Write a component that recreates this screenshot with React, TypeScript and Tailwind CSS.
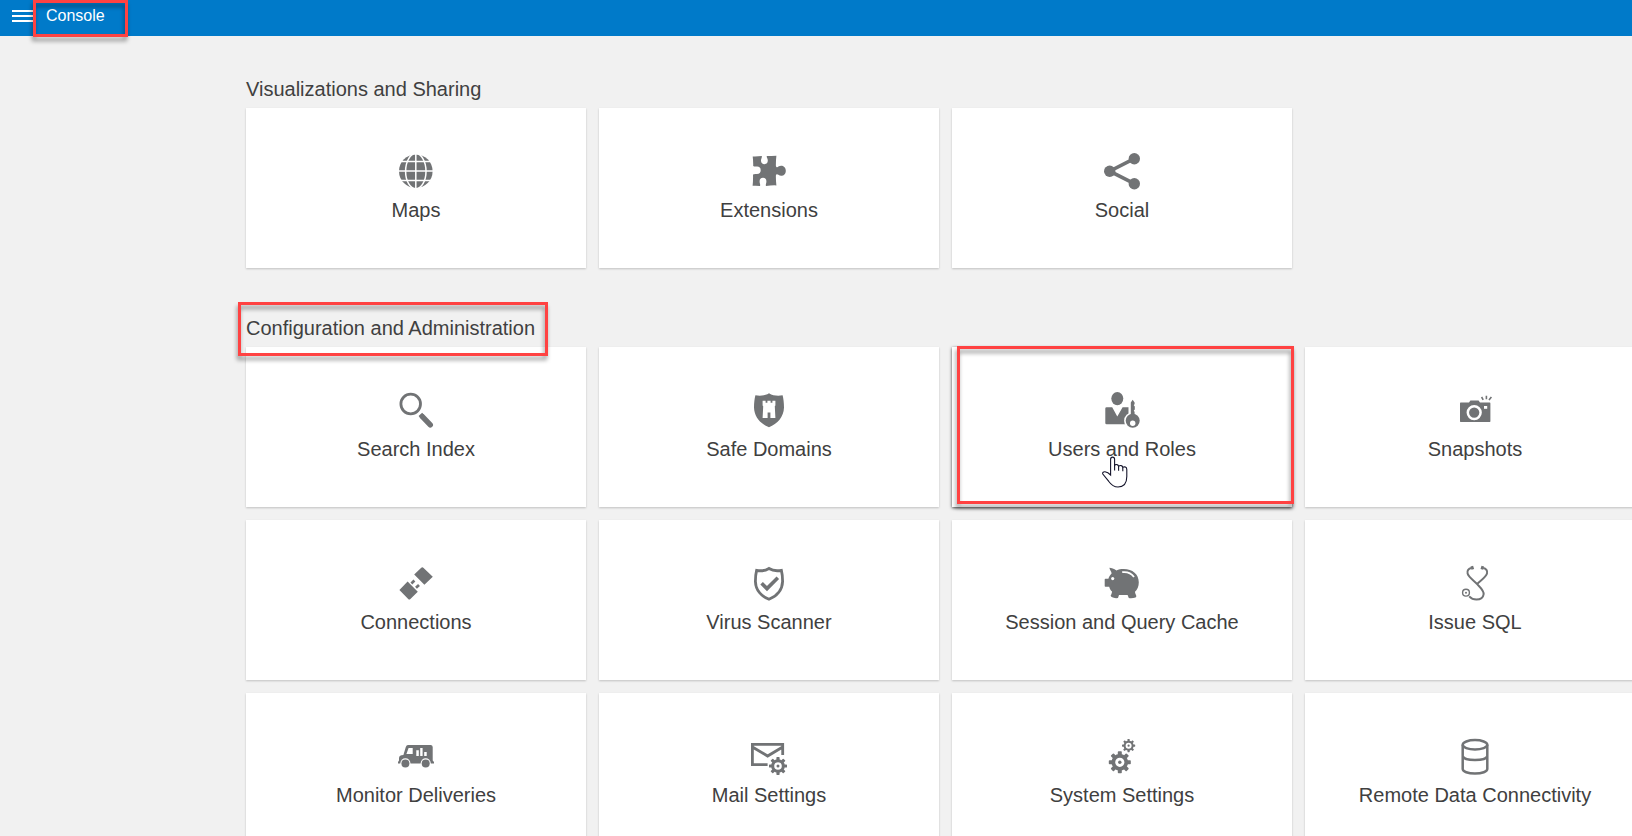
import type { ReactNode } from "react";

function Gear({ cx, cy, r, hole, dot, tooth }: { cx: number; cy: number; r: number; hole: number; dot: number; tooth: number }) {
  const angles = [0, 45, 90, 135, 180, 225, 270, 315];
  const mid = (r * 0.76 + hole) / 2;
  return (
    <g>
      {angles.map((a) => (
        <rect key={a} x={cx - tooth / 2} y={cy - r} width={tooth} height={r * 0.4} rx={tooth * 0.2} transform={`rotate(${a} ${cx} ${cy})`} />
      ))}
      <circle cx={cx} cy={cy} r={mid} fill="none" stroke="currentColor" strokeWidth={r * 0.76 - hole} />
      <circle cx={cx} cy={cy} r={dot} />
    </g>
  );
}

const icons: Record<string, ReactNode> = {
  maps: (
    <>
      <circle cx="17.8" cy="18.2" r="16.8" />
      <g fill="none" stroke="white" strokeWidth="1.5">
        <path d="M0 8.5H36M0 17.9H36M0 27.4H36M17.8 0V36" />
        <ellipse cx="17.8" cy="18.2" rx="10.2" ry="17.6" />
      </g>
    </>
  ),
  extensions: (
    <path d="M1.7 3.4Q6 3.6 10.8 3C11.2 4.6 10 5.4 10 7.6A3.4 3.6 0 0 0 16.8 7.6C16.8 5.4 15.4 4.6 15.8 3Q20.6 3 25.4 2.8Q24.8 7.5 24.9 13C25.3 14.6 26.6 14.4 27.4 13.6C29.8 11.6 34.8 12.6 34.8 17.7C34.8 22.8 29.8 23.8 27.4 21.8C26.2 21 25.2 21 24.9 22.6Q24.8 27.5 25.4 32.4Q20.5 32.2 15 33C14.4 31.6 15.4 30.6 15.4 28.2A3.4 3.5 0 0 0 8.6 28.2C8.6 30.6 9.6 31.6 9 33Q5.4 32.4 1.6 32.8Q2.2 28 2 21.6C3.8 20.4 4.8 21.2 6 20.9A3.7 3.7 0 0 0 6 13.5C4.8 13.3 3.8 14 2.2 13Q2.3 7.8 1.7 3.4Z" />
  ),
  social: (
    <>
      <path d="M30.3 5.7L5.7 18.2L30.3 30.7" fill="none" stroke="currentColor" strokeWidth="3.6" />
      <circle cx="30.3" cy="5.7" r="5.7" />
      <circle cx="5.7" cy="18.2" r="5.7" />
      <circle cx="30.3" cy="30.7" r="5.7" />
    </>
  ),
  search: (
    <g fill="none" stroke="currentColor">
      <circle cx="12.7" cy="12" r="9.8" strokeWidth="2.8" />
      <path d="M22.4 22.4L24.6 24.8" strokeWidth="4.8" />
      <path d="M24.4 24.6L32.3 32.8" strokeWidth="5.4" strokeLinecap="round" />
    </g>
  ),
  safe: (
    <>
      <path d="M18 1.2C14 3.8 9 4.1 4.4 3.3C3.6 6.5 3 10.5 3 15.6C3.3 25 9.5 32 18 35.2C26.5 32 32.7 25 33 15.6C33 10.5 32.4 6.5 31.6 3.3C27 4.1 22 3.8 18 1.2Z" />
      <path d="M11.6 8.7H14.6V10.8H16.4V8.7H19.6V10.8H21.4V8.7H24.4V13.6L23.8 14.2L24.4 26H19.4V20.6H16.6V26H11.6L12.2 14.2L11.6 13.6Z" fill="white" />
    </>
  ),
  users: (
    <>
      <ellipse cx="13.3" cy="6.6" rx="6" ry="6.6" />
      <path d="M2.6 15.3H8.2L13.3 24.6L18.6 15.3H24.6V32.3H2.6Q1.3 32.3 1.3 31V16.6Q1.3 15.3 2.6 15.3Z" />
      <path d="M25.6 9V21.5" stroke="white" strokeWidth="1.6" />
      <circle cx="28.7" cy="28.8" r="8.6" fill="white" />
      <path d="M26.8 10.4L28.7 7.8L30.6 10.4V12L29.8 13.2L30.8 14.4V17.4L29.8 18.6L30.6 20V23H26.8Z" />
      <circle cx="28.7" cy="28.8" r="7" />
      <circle cx="28.7" cy="31.2" r="2.7" fill="white" />
    </>
  ),
  snapshots: (
    <>
      <path d="M3.6 10.6H12L13.4 8.4H21.6L23 10.6H32.8Q33.4 10.6 33.4 11.4V29.2Q33.4 30 32.8 30H3.6Q3 30 3 29.2V11.4Q3 10.6 3.6 10.6Z" />
      <circle cx="17.2" cy="20.6" r="6.4" fill="none" stroke="white" strokeWidth="2.5" />
      <rect x="27" y="14" width="3.2" height="2.8" fill="white" />
      <path d="M24.6 5L26.2 7.8M29.4 3.8V7.2M34.4 5L32 8" fill="none" stroke="currentColor" strokeWidth="1.6" />
    </>
  ),
  connections: (
    <>
      <path d="M23 3Q24.3 1.6 25.6 3L34.8 11.8L26.4 19.8L16.2 9.6ZM9.6 16.6L19.8 26.8L12.4 34Q11.3 35 10.2 34L1.4 25Z" />
      <path d="M13.4 18.4L16.4 15.6M18 22.8L21 20" fill="none" stroke="currentColor" strokeWidth="2.7" />
    </>
  ),
  virus: (
    <g fill="none" stroke="currentColor">
      <path d="M18 3.5C14 6 9.8 6.2 5.6 5.3C4.8 8.5 4.4 12 4.4 16.4C4.7 25 10.2 31.4 18 34.2C25.8 31.4 31.3 25 31.6 16.4C31.6 12 31.2 8.5 30.4 5.3C26.2 6.2 22 6 18 3.5Z" strokeWidth="2.8" />
      <path d="M10.6 18.2L16 23.6L26.8 12.8" strokeWidth="3.6" />
    </g>
  ),
  cache: (
    <>
      <path d="M5.4 2.8C7.4 3.2 10 3.6 12.4 5.4C14.6 4.4 17 4 19.6 4C28.6 4 34.8 9.4 34.8 17.2C34.8 21.4 33.4 24.4 31 26.8C31 28.4 32 29.6 32.4 31.2L31.6 32.4Q28 33.6 24.8 33L23.6 30H15L14 33Q10.4 33.6 7.6 32L6.6 30.8C7.4 29.4 8 28 8 26.6C6.4 25.2 5.6 23.6 5.2 21.8H1.4Q.7 21.8 .7 21V14.6Q.7 13.8 1.4 13.8H4.4C5 11.6 6 10 7.6 8.4C7.6 6.2 5.6 5.2 5.4 2.8Z" />
      <circle cx="8.7" cy="13.6" r="1.6" fill="white" />
      <path d="M18.2 7.2C23 6.6 27.6 8.6 30 12" fill="none" stroke="white" strokeWidth="1.8" />
    </>
  ),
  sql: (
    <g fill="none" stroke="currentColor" strokeWidth="2">
      <path d="M14.4 3C11.6 3.4 9.8 5.6 10.6 8.6C11.8 12.8 18 16.4 20.4 19.4C23.4 22.6 27.2 25.6 26.6 29.4C26 33.4 22.8 34.6 19.4 34.6C16.4 34.6 14 33.4 12.2 31.4" />
      <path d="M26.2 3C29 3.4 30.8 5.6 30 8.6C28.8 12.8 22.8 15.8 20.2 19" />
      <path d="M14 3.2L16.6 2.4M26.6 3.2L24 2.4" strokeWidth="3.4" />
      <circle cx="9" cy="27.7" r="3.4" strokeWidth="1.4" />
      <circle cx="9" cy="27.7" r="1" fill="currentColor" stroke="none" />
    </g>
  ),
  deliveries: (
    <>
      <path d="M10 7H32.6Q34.6 7 34.7 9V22.4L36 24V25.4H0V24L1 22.4V20Q1.2 17.4 3.4 17.2L5.4 17L7.8 9Q8.4 7 10 7Z" />
      <path d="M10.6 10H14.7V16H8.4ZM18.3 12.2H20.8V18H18.3ZM22.2 10H24.6V18H22.2ZM26.2 14H28.7V18H26.2Z" fill="white" />
      <circle cx="7.4" cy="25.4" r="5.1" fill="white" />
      <circle cx="27.7" cy="25.4" r="5.1" fill="white" />
      <circle cx="7.4" cy="25.6" r="4" />
      <circle cx="27.7" cy="25.6" r="4" />
    </>
  ),
  mail: (
    <>
      <path d="M16.6 26.6H1.4V6.4H31.7V17M1.4 9L16.6 18L31.7 9" fill="none" stroke="currentColor" strokeWidth="2.8" />
      <Gear cx={27} cy={28} r={9} hole={3.8} dot={1.5} tooth={3.2} />
    </>
  ),
  system: (
    <>
      <Gear cx={15.8} cy={24.3} r={11} hole={4.6} dot={1.7} tooth={4} />
      <Gear cx={24.6} cy={7.7} r={6.6} hole={3} dot={1.1} tooth={2.2} />
    </>
  ),
  remote: (
    <g fill="none" stroke="currentColor" strokeWidth="2.5">
      <ellipse cx="18" cy="6.8" rx="12.3" ry="4.7" />
      <path d="M5.7 6.8V31C5.7 33.6 11 35.6 18 35.6S30.3 33.6 30.3 31V6.8M5.7 18.2C6.6 20.6 11.4 22 18 22S29.4 20.6 30.3 18.2" />
    </g>
  ),
};

const visualization = [
  { id: "maps", label: "Maps" },
  { id: "extensions", label: "Extensions" },
  { id: "social", label: "Social" },
];

const administration = [
  { id: "search", label: "Search Index" },
  { id: "safe", label: "Safe Domains" },
  { id: "users", label: "Users and Roles" },
  { id: "snapshots", label: "Snapshots" },
  { id: "connections", label: "Connections" },
  { id: "virus", label: "Virus Scanner" },
  { id: "cache", label: "Session and Query Cache" },
  { id: "sql", label: "Issue SQL" },
  { id: "deliveries", label: "Monitor Deliveries" },
  { id: "mail", label: "Mail Settings" },
  { id: "system", label: "System Settings" },
  { id: "remote", label: "Remote Data Connectivity" },
];

function Highlight({ className }: { className: string }) {
  return (
    <span
      aria-hidden="true"
      className={`pointer-events-none absolute z-10 border-3 border-[#ff4242] drop-shadow-[-1px_4px_2px_rgba(0,0,0,0.4)] ${className}`}
    />
  );
}

function HandCursor() {
  return (
    <svg aria-hidden="true" viewBox="0 0 26 32" className="pointer-events-none absolute top-[109px] left-[150px] z-10 h-8 w-[26px]">
      <path
        d="M8.6 19V3.2C8.6 .4 12.6 .4 12.6 3.2V9.4C13.8 8 16.4 8.4 16.6 10.4C18 9 20.6 9.4 20.8 11.4C22.4 10.2 24.8 11 24.8 13.4V20.6C24.8 27 21.6 31 16 31C11.8 31 9.2 28.8 6.6 25.2L.8 18C.2 16.4 1.6 15.6 3 15.8C5.2 16.2 7 17.4 8.6 19Z"
        fill="white"
        stroke="#14142b"
        strokeWidth="1.1"
      />
      <path d="M12.6 9V14.4M16.6 10.4V14.8M20.8 11.4V15.2" stroke="#14142b" strokeWidth="1.1" fill="none" />
    </svg>
  );
}

function Card({ id, label }: { id: string; label: string }) {
  const active = id === "users";
  return (
    <a
      href={`#${id}`}
      className={`relative flex h-40 flex-col items-center gap-[7px] bg-white pt-[45px] ${
        active ? "shadow-[0_1px_3px_rgba(0,0,0,0.75)]" : "shadow-[0_1px_2px_rgba(0,0,0,0.2)]"
      }`}
    >
      <svg aria-hidden="true" viewBox="0 0 36 36" className="size-9 overflow-visible text-[#717375]" fill="currentColor">
        {icons[id]}
      </svg>
      <span className="text-xl">{label}</span>
      {active && <Highlight className="-top-px left-[5px] h-[158px] w-[337px]" />}
      {active && <HandCursor />}
    </a>
  );
}

function Section({ title, items, marked }: { title: string; items: { id: string; label: string }[]; marked?: boolean }) {
  return (
    <section>
      <h2 className="relative mb-[5px] w-fit text-xl">
        {title}
        {marked && <Highlight className="-top-3 -left-2 h-[54px] w-[310px]" />}
      </h2>
      <div className="grid grid-cols-[repeat(4,340px)] gap-[13px]">
        {items.map((item) => (
          <Card key={item.id} id={item.id} label={item.label} />
        ))}
      </div>
    </section>
  );
}

export default function App() {
  return (
    <div className="flex h-screen flex-col overflow-hidden bg-[#f1f1f1] font-['Liberation_Sans',Arial,sans-serif] text-[#404040]">
      <header className="flex h-9 shrink-0 items-center bg-[#007ac9] pl-3 text-white">
        <button type="button" aria-label="Open menu" className="mb-1 flex w-[22px] flex-col gap-[3px]">
          <span className="h-0.5 w-full bg-white" />
          <span className="h-0.5 w-full bg-white" />
          <span className="h-0.5 w-full bg-white" />
        </button>
        <div className="relative flex h-9 w-24 items-center pb-1 pl-3">
          <h1 className="text-base">Console</h1>
          <Highlight className="top-0 -left-px h-[37px] w-[95px]" />
        </div>
      </header>
      <main className="flex flex-col gap-[46px] pt-[39px] pl-[246px]">
        <Section title="Visualizations and Sharing" items={visualization} />
        <Section title="Configuration and Administration" items={administration} marked />
      </main>
    </div>
  );
}
